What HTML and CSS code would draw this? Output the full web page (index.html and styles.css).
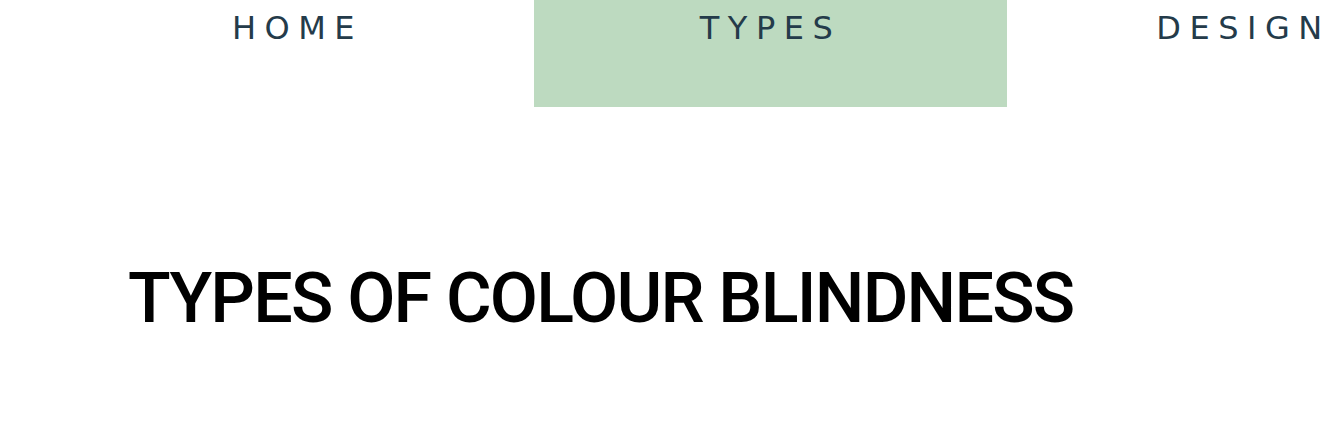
FILE: index.html
```html
<!DOCTYPE html>
<html>
<head>
<meta charset="utf-8">
<link rel="stylesheet" href="styles.css">
</head>
<body>
<nav class="nav">
  <a class="nav-item" href="#">HOME</a>
  <a class="nav-item active" href="#">TYPES</a>
  <a class="nav-item" href="#">DESIGN</a>
</nav>
<main class="content">
  <h1 class="title">TYPES OF COLOUR BLINDNESS</h1>
</main>
</body>
</html>
```
FILE: styles.css
```css
html, body {
  margin: 0;
  padding: 0;
  background: #ffffff;
  overflow: hidden;
  width: 1340px;
  height: 426px;
}
.nav {
  display: flex;
  padding-left: 61px;
  height: 107px;
  width: max-content;
}
.nav-item {
  width: 473px;
  height: 107px;
  display: flex;
  justify-content: center;
  padding-top: 9px;
  box-sizing: border-box;
  font-family: "DejaVu Sans", sans-serif;
  font-size: 32px;
  letter-spacing: 8.5px;
  color: #243b4a;
  text-decoration: none;
  line-height: 38px;
}
.nav-item.active {
  background: #bddac0;
}
.content {
  padding: 150px 0 0 128px;
}
.title {
  margin: 0;
  font-family: Roboto, sans-serif;
  font-weight: 500;
  font-size: 70px;
  letter-spacing: -1.8px;
  line-height: 82px;
  color: #000;
}
```
